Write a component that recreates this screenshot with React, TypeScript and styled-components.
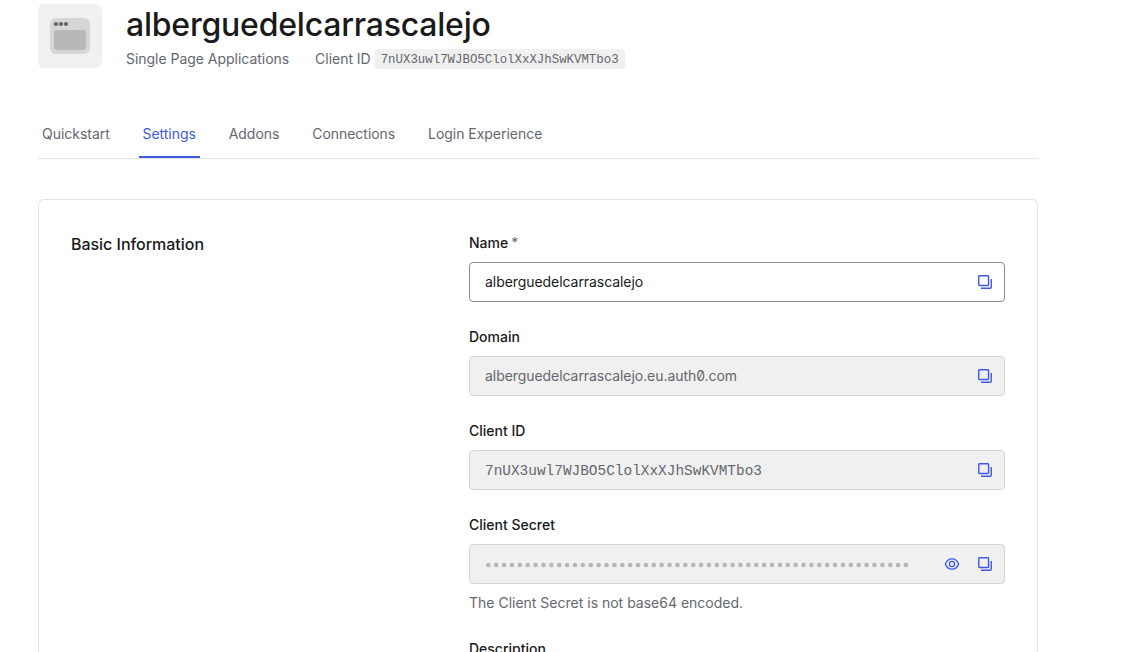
import React from "react";
import styled, { createGlobalStyle } from "styled-components";

const GlobalStyle = createGlobalStyle`
  *, *::before, *::after { box-sizing: border-box; }
  body {
    margin: 0;
    background: #fff;
    color: #1e212a;
    font-family: Inter, "Liberation Sans", sans-serif;
    font-size: 14px;
    line-height: 22px;
    font-feature-settings: "zero";
  }
`;

const Page = styled.main`
  display: flex;
  flex-direction: column;
  width: 1038px;
  height: 652px;
  padding: 4px 0 0 38px;
  overflow: hidden;
`;

const Header = styled.header`
  display: flex;
  flex: none;
  gap: 24px;
  height: 66px;
`;

const AppIcon = styled.div`
  display: flex;
  align-items: center;
  justify-content: center;
  width: 64px;
  height: 64px;
  border-radius: 6px;
  background: #f0f0f0;
`;

const Title = styled.h1`
  margin: 0;
  height: 40px;
  color: #1a1a1a;
  font-size: 32px;
  font-weight: 500;
  line-height: 42px;
  letter-spacing: -0.22px;
`;

const Meta = styled.div`
  display: flex;
  align-items: center;
  gap: 26px;
  margin-top: 4px;
  color: #65676e;
  letter-spacing: -0.03px;
`;

const MetaItem = styled.span`
  display: flex;
  align-items: center;
  gap: 4px;
  white-space: nowrap;
`;

const Code = styled.code`
  height: 20px;
  padding: 0 6px;
  border-radius: 4px;
  background: #f0f0f0;
  font-family: "Liberation Mono", monospace;
  font-size: 12.4px;
  line-height: 23px;
  letter-spacing: 0;
`;

const Tabs = styled.nav`
  display: flex;
  flex: none;
  gap: 24.8px;
  height: 49px;
  margin-top: 40px;
  border-bottom: 1px solid #e5e5e5;
`;

const Tab = styled.a<{ $active?: boolean }>`
  padding: 13px 4px 0;
  border-bottom: 2px solid ${(p) => (p.$active ? "#3f59e4" : "transparent")};
  color: ${(p) => (p.$active ? "#3f59e4" : "#65676e")};
  letter-spacing: -0.03px;
`;

const Card = styled.section`
  display: flex;
  flex: 1;
  min-height: 0;
  justify-content: space-between;
  margin-top: 40px;
  padding: 32px 32px 0;
  border: 1px solid #e3e4e6;
  border-bottom: 0;
  border-radius: 6px 6px 0 0;
`;

const SectionTitle = styled.h2`
  margin: 0;
  color: #1a1a1a;
  font-size: 16px;
  font-weight: 500;
  line-height: 24px;
  letter-spacing: -0.03px;
`;

const Fields = styled.div`
  display: flex;
  flex-direction: column;
  gap: 24px;
  width: 536px;
`;

const Field = styled.div`
  display: flex;
  flex-direction: column;
  gap: 8px;
`;

const Label = styled.label`
  color: #1a1a1a;
  font-weight: 500;
`;

const Required = styled.span`
  margin-left: 3px;
  color: #65676e;
  font-weight: 400;
`;

const InputBox = styled.div<{ $readOnly?: boolean }>`
  display: flex;
  align-items: center;
  gap: 17px;
  height: 40px;
  padding: 0 11px 0 15px;
  border: 1px solid ${(p) => (p.$readOnly ? "#d5d5d6" : "#8a8b8f")};
  border-radius: 4px;
  background: ${(p) => (p.$readOnly ? "#f0f0f0" : "#fff")};
  color: ${(p) => (p.$readOnly ? "#65676e" : "#1a1a1a")};
`;

const Value = styled.span<{ $mono?: boolean }>`
  flex: 1;
  padding-top: ${(p) => (p.$mono ? "2px" : "0")};
  white-space: nowrap;
  font-family: ${(p) => (p.$mono ? '"Liberation Mono", monospace' : "inherit")};
  font-size: ${(p) => (p.$mono ? "14.4px" : "14px")};
  letter-spacing: ${(p) => (p.$mono ? "0.02px" : "-0.06px")};
`;

const Dots = styled.svg`
  display: block;
  margin-right: auto;
`;

const Hint = styled.p`
  margin: 0;
  color: #65676e;
  letter-spacing: 0;
`;

const BrowserGlyph = () => (
  <svg width="40" height="36" viewBox="0 0 40 36">
    <rect width="40" height="36" rx="6" fill="#d6d6d6" />
    <rect x="4" y="12" width="32" height="20" rx="3" fill="#b8b8b8" />
    <g fill="#636363">
      <circle cx="6" cy="6" r="2.1" />
      <circle cx="11" cy="6" r="2.1" />
      <circle cx="16" cy="6" r="2.1" />
    </g>
  </svg>
);

const CopyIcon = () => (
  <svg width="16" height="16" viewBox="0 0 16 16" fill="none" stroke="#3f59e4" strokeWidth="1.4">
    <rect x="1.75" y="1.75" width="9.8" height="9.8" rx="0.7" />
    <path d="M4 14.25h9.25a1 1 0 0 0 1-1V5" />
  </svg>
);

const EyeIcon = () => (
  <svg width="16" height="16" viewBox="0 0 16 16" fill="none" stroke="#3f59e4" strokeWidth="1.3">
    <path d="M1.4 8C2.6 4.5 5.2 2.8 8 2.8S13.4 4.5 14.6 8C13.4 11.5 10.8 13.2 8 13.2S2.6 11.5 1.4 8Z" />
    <circle cx="8" cy="8" r="2.6" />
  </svg>
);

const SecretDots = () => (
  <Dots width="430" height="8" viewBox="0 0 430 8" fill="#b5b5b5">
    {Array.from({ length: 54 }, (_, i) => (
      <circle key={i} cx={3.3 + i * 7.881} cy="5" r="2.3" />
    ))}
  </Dots>
);

export default function App() {
  return (
    <>
      <GlobalStyle />
      <Page>
        <Header>
          <AppIcon>
            <BrowserGlyph />
          </AppIcon>
          <div>
            <Title>alberguedelcarrascalejo</Title>
            <Meta>
              <MetaItem>Single Page Applications</MetaItem>
              <MetaItem>
                Client ID <Code>7nUX3uwl7WJBO5ClolXxXJhSwKVMTbo3</Code>
              </MetaItem>
            </Meta>
          </div>
        </Header>
        <Tabs>
          <Tab>Quickstart</Tab>
          <Tab $active>Settings</Tab>
          <Tab>Addons</Tab>
          <Tab>Connections</Tab>
          <Tab>Login Experience</Tab>
        </Tabs>
        <Card>
          <SectionTitle>Basic Information</SectionTitle>
          <Fields>
            <Field>
              <Label>
                Name<Required>*</Required>
              </Label>
              <InputBox>
                <Value>alberguedelcarrascalejo</Value>
                <CopyIcon />
              </InputBox>
            </Field>
            <Field>
              <Label>Domain</Label>
              <InputBox $readOnly>
                <Value>alberguedelcarrascalejo.eu.auth0.com</Value>
                <CopyIcon />
              </InputBox>
            </Field>
            <Field>
              <Label>Client ID</Label>
              <InputBox $readOnly>
                <Value $mono>7nUX3uwl7WJBO5ClolXxXJhSwKVMTbo3</Value>
                <CopyIcon />
              </InputBox>
            </Field>
            <Field>
              <Label>Client Secret</Label>
              <InputBox $readOnly>
                <SecretDots />
                <EyeIcon />
                <CopyIcon />
              </InputBox>
              <Hint>The Client Secret is not base64 encoded.</Hint>
            </Field>
            <Field>
              <Label>Description</Label>
            </Field>
          </Fields>
        </Card>
      </Page>
    </>
  );
}
